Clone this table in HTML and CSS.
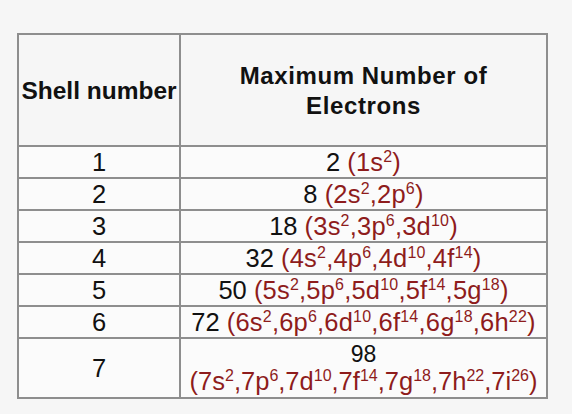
FILE: index.html
```html
<!DOCTYPE html>
<html>
<head>
<meta charset="utf-8">
<link rel="stylesheet" href="styles.css">
</head>
<body>
<table class="shells">
  <tr class="head">
    <th class="c1"><span class="shell">Shell number</span></th>
    <th class="c2">Maximum Number of<br>Electrons</th>
  </tr>
  <tr class="row"><td>1</td><td>2 <span class="cfg">(1s<sup>2</sup>)</span></td></tr>
  <tr class="row"><td>2</td><td>8 <span class="cfg">(2s<sup>2</sup>,2p<sup>6</sup>)</span></td></tr>
  <tr class="row"><td>3</td><td>18 <span class="cfg">(3s<sup>2</sup>,3p<sup>6</sup>,3d<sup>10</sup>)</span></td></tr>
  <tr class="row"><td>4</td><td>32 <span class="cfg">(4s<sup>2</sup>,4p<sup>6</sup>,4d<sup>10</sup>,4f<sup>14</sup>)</span></td></tr>
  <tr class="row"><td>5</td><td>50 <span class="cfg">(5s<sup>2</sup>,5p<sup>6</sup>,5d<sup>10</sup>,5f<sup>14</sup>,5g<sup>18</sup>)</span></td></tr>
  <tr class="row"><td>6</td><td>72 <span class="cfg">(6s<sup>2</sup>,6p<sup>6</sup>,6d<sup>10</sup>,6f<sup>14</sup>,6g<sup>18</sup>,6h<sup>22</sup>)</span></td></tr>
  <tr class="row last"><td>7</td><td><div class="l1">98</div><div class="cfg l2">(7s<sup>2</sup>,7p<sup>6</sup>,7d<sup>10</sup>,7f<sup>14</sup>,7g<sup>18</sup>,7h<sup>22</sup>,7i<sup>26</sup>)</div></td></tr>
</table>
</body>
</html>
```
FILE: styles.css
```css
html, body {
  margin: 0;
  padding: 0;
  background: #f6f6f6;
}
body {
  padding: 33px 0 0 17px;
  font-family: "Liberation Sans", Arial, sans-serif;
  color: #111;
}
.shells {
  border-collapse: collapse;
  width: 531px;
  background: #fbfbfb;
  table-layout: fixed;
}
.shells th, .shells td {
  border: 2px solid #8e8e8e;
  padding: 0;
  text-align: center;
  vertical-align: middle;
  overflow: visible;
  white-space: nowrap;
}
.c1 { width: 160px; }
.head th {
  height: 108px;
  font-weight: bold;
  font-size: 24px;
  line-height: 30px;
  letter-spacing: 0.6px;
  padding-top: 2px;
  background: #f6f6f6;
}
.shell {
  letter-spacing: 0;
  font-size: 24.5px;
}
.row td {
  height: 30px;
  font-size: 25.5px;
  line-height: 28px;
}
.cfg {
  color: #8e1c1c;
  letter-spacing: 0.2px;
}
.cfg sup {
  font-size: 16px;
  line-height: 0;
  vertical-align: 9px;
}
.last td { height: 58px; }
.l1 {
  font-size: 23px;
  line-height: 26px;
}
.l2 {
  line-height: 29px;
  letter-spacing: 0;
}
```
